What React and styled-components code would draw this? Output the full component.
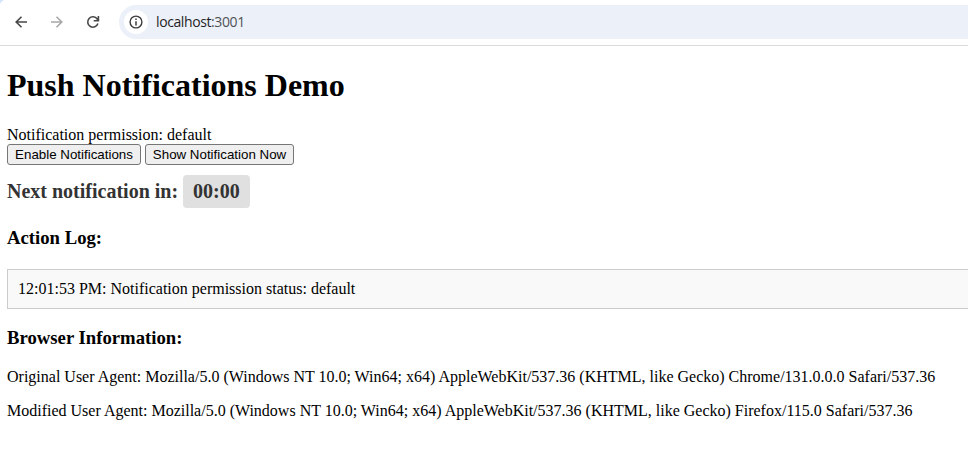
import React from "react";
import styled, { createGlobalStyle } from "styled-components";

const GlobalStyle = createGlobalStyle`
  html, body { margin: 0; padding: 0; background: #fff; overflow: hidden; }
`;
const Window = styled.div`
  width: 968px;
  height: 450px;
  overflow: hidden;
  background: radial-gradient(circle at 8px 8px, #fff 8.500px, #d3e3fd 9.500px) 0 0 / 6px 6px no-repeat #fff;
`;
const Toolbar = styled.header`
  box-sizing: border-box;
  height: 46px;
  padding: 5px 0 6px 13px;
  display: flex;
  align-items: center;
  border-bottom: 1px solid #dcdcdc;
`;
const NavIcon = styled.svg`
  flex: none;
  width: 16px;
  height: 16px;
  margin-right: 20px;
  fill: none;
  stroke: ${(p) => p.$color || "#474747"};
  stroke-width: 1.6;
`;
const AddressBar = styled.div`
  flex: 1;
  height: 34px;
  margin-left: -2px;
  padding-left: 5px;
  display: flex;
  align-items: center;
  background: #ecf0f9;
  border-radius: 17px 0 0 17px;
`;
const InfoBadge = styled.span`
  width: 24px;
  height: 24px;
  display: flex;
  align-items: center;
  justify-content: center;
  border-radius: 50%;
  background: #fff;
`;
const Url = styled.span`
  margin-left: 8px;
  font: 14px/18px "Open Sans", sans-serif;
  letter-spacing: -0.4px;
  color: #1f1f1f;
`;
const Port = styled.span`
  color: #505357;
`;
const Page = styled.main`
  padding-left: 7px;
  font: 16px/18px "Liberation Serif", serif;
  color: #000;
`;
const Title = styled.h1`
  margin: 21px 0 0;
  font-size: 32px;
  line-height: 37px;
`;
const Status = styled.div`
  margin-top: 22px;
`;
const Actions = styled.div`
  display: flex;
  gap: 4px;
`;
const ActionButton = styled.button`
  box-sizing: border-box;
  width: ${(p) => p.$width}px;
  height: 21px;
  padding: 0;
  white-space: nowrap;
  font: 13.333px "Liberation Sans", sans-serif;
  color: #000;
  background: #efefef;
  border: 1px solid #767676;
  border-radius: 3px;
`;
const Countdown = styled.div`
  margin-top: 10px;
  height: 33px;
  display: flex;
  align-items: baseline;
  gap: 5px;
  font-size: 20px;
  font-weight: bold;
  color: #333;
`;
const Timer = styled.span`
  box-sizing: border-box;
  height: 33px;
  padding: 0 10px;
  line-height: 33px;
  border-radius: 4px;
  background: #e0e0e0;
`;
const SectionTitle = styled.h3`
  margin: ${(p) => p.$top}px 0 0;
  font-size: 18.72px;
  line-height: 21px;
`;
const Log = styled.div`
  box-sizing: border-box;
  height: 40px;
  margin-top: 21px;
  padding: 10px;
  border: 1px solid #ccc;
  border-right: 0;
  background: #f9f9f9;
`;
const Agent = styled.p`
  margin: ${(p) => p.$top}px 0 0;
  white-space: nowrap;
`;

export default function App() {
  return (
    <Window>
      <GlobalStyle />
      <Toolbar>
        <NavIcon viewBox="0 0 16 16"><path d="M14 8H3.300M8.500 2.700 3.200 8l5.300 5.300" /></NavIcon>
        <NavIcon viewBox="0 0 16 16" $color="#a8a8a8"><path d="M2 8h10.700M7.500 2.700 12.800 8l-5.300 5.300" /></NavIcon>
        <NavIcon viewBox="0 0 16 16"><path d="M12.900 9.500A5.200 5.200 0 1 1 12.200 5L13.200 6.300M13.400 2v4.700H8.700" /></NavIcon>
        <AddressBar>
          <InfoBadge>
            <svg width="14" height="14" viewBox="0 0 14 14"><circle cx="7" cy="7" r="5.9" fill="none" stroke="#3c3c3c" strokeWidth="1.4" /><path d="M6.250 6.200h1.500v4.200h-1.500zM6.250 3.600h1.500v1.500h-1.500z" fill="#3c3c3c" /></svg>
          </InfoBadge>
          <Url>localhost<Port>:3001</Port></Url>
        </AddressBar>
      </Toolbar>
      <Page>
        <Title>Push Notifications Demo</Title>
        <Status>Notification permission: default</Status>
        <Actions>
          <ActionButton $width={134}>Enable Notifications</ActionButton>
          <ActionButton $width={149}>Show Notification Now</ActionButton>
        </Actions>
        <Countdown>Next notification in: <Timer>00:00</Timer></Countdown>
        <SectionTitle $top={19}>Action Log:</SectionTitle>
        <Log>12:01:53 PM: Notification permission status: default</Log>
        <SectionTitle $top={18}>Browser Information:</SectionTitle>
        <Agent $top={20}>Original User Agent: Mozilla/5.0 (Windows NT 10.0; Win64; x64) AppleWebKit/537.36 (KHTML, like Gecko) Chrome/131.0.0.0 Safari/537.36</Agent>
        <Agent $top={16}>Modified User Agent: Mozilla/5.0 (Windows NT 10.0; Win64; x64) AppleWebKit/537.36 (KHTML, like Gecko) Firefox/115.0 Safari/537.36</Agent>
      </Page>
    </Window>
  );
}
